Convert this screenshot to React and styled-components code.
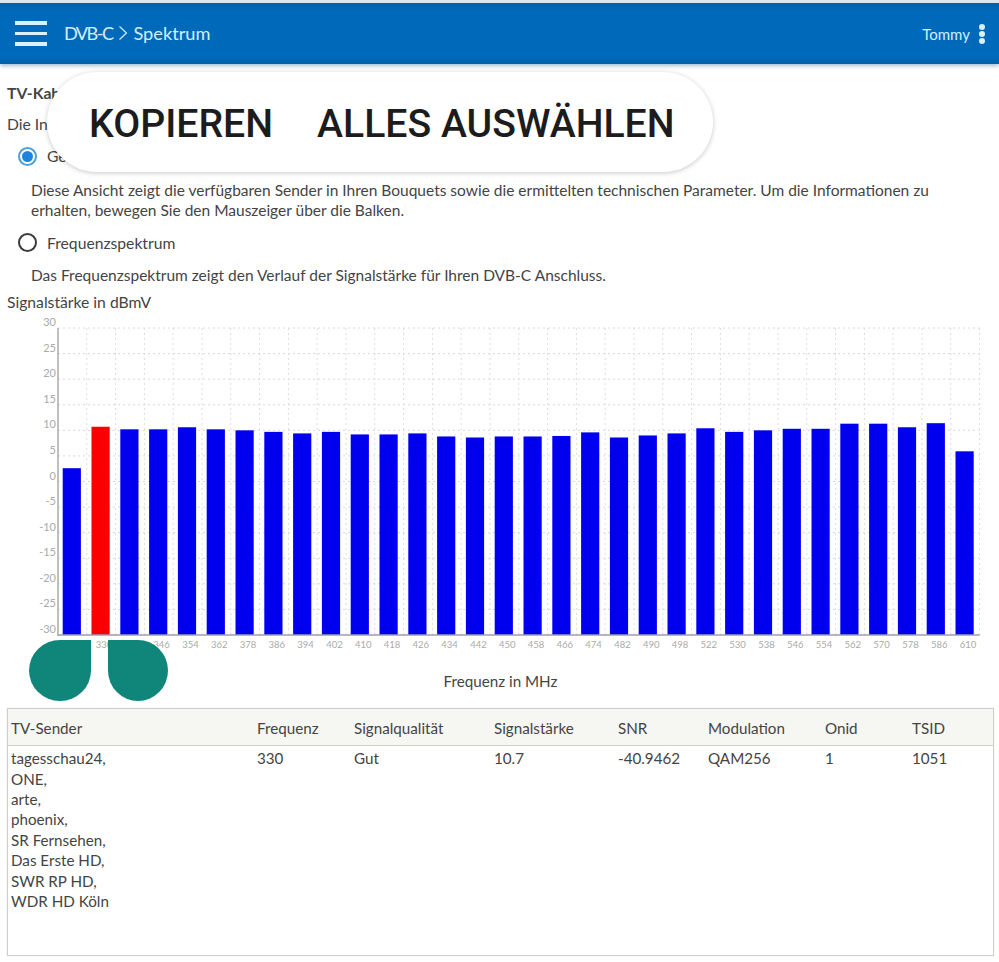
import React from 'react'
import styled, { createGlobalStyle } from 'styled-components'

const GlobalStyle = createGlobalStyle`
  html, body {
    margin: 0;
    padding: 0;
    background: #fff;
  }
  body {
    font-family: Lato, "Noto Sans", sans-serif;
    font-size: 15.7px;
    color: #444;
  }
`

const Page = styled.div`
  position: relative;
  width: 999px;
  height: 962px;
  overflow: hidden;
`

const TopBar = styled.header`
  display: flex;
  align-items: center;
  height: 61px;
  border-top: 3px solid #d3e7f5;
  padding: 0 14px 0 15px;
  background: linear-gradient(#005fa8, #0069ba 12%, #0069ba 90%, #005fa6);
  box-shadow: 0 2px 4px rgba(0, 70, 130, 0.35);
  color: #d2efff;
`

const MenuButton = styled.div`
  display: flex;
  flex-direction: column;
  gap: 7px;
  width: 32px;
  margin-right: 17px;

  span {
    height: 3.5px;
    background: #d9f1ff;
  }
`

const Crumbs = styled.div`
  display: flex;
  align-items: center;
  flex: 1;
  padding-bottom: 2px;
  font-size: 18.2px;

  svg {
    margin: 0 5px 0 6px;
  }
`

const CrumbRoot = styled.span`
  letter-spacing: -1.6px;
`

const UserName = styled.span`
  font-size: 15px;
  margin-right: 9px;
`

const Kebab = styled.div`
  display: flex;
  flex-direction: column;
  gap: 1px;

  span {
    width: 6px;
    height: 6px;
    border-radius: 50%;
    background: #d9f1ff;
  }
`

const Content = styled.main`
  padding: 0 5px 0 7px;
`

const Heading = styled.h1`
  margin: 0;
  padding-top: 19px;
  font-size: 15.7px;
  line-height: 20px;
  font-weight: 700;
  color: #444;
`

const Intro = styled.p`
  margin: 11px 0 0;
  line-height: 20px;
`

const RadioRow = styled.label`
  display: flex;
  align-items: center;
  gap: 10px;
  margin: ${p => p.$top}px 0 0 11px;
  line-height: 20px;
`

const RadioDot = styled.span`
  box-sizing: border-box;
  display: inline-flex;
  align-items: center;
  justify-content: center;
  width: 19px;
  height: 19px;
  border-radius: 50%;
  border: 2px solid ${p => (p.$checked ? '#4d9fd8' : '#3a3a3a')};

  &::after {
    content: '';
    width: 11px;
    height: 11px;
    border-radius: 50%;
    background: ${p => (p.$checked ? '#1f84dc' : 'transparent')};
  }
`

const Hint = styled.p`
  margin: ${p => p.$top}px 0 0 24px;
  font-size: 15.5px;
  line-height: 20.4px;
  max-width: 930px;
`

const AxisTitle = styled.div`
  margin-top: 7px;
  line-height: 20px;
`

const Chart = styled.svg`
  display: block;
  width: 987px;
  height: 354px;
`

const XTitle = styled.div`
  text-align: center;
  margin-top: 5px;
  font-size: 15.2px;
  line-height: 20px;
`

const Table = styled.div`
  margin-top: 17px;
  height: 248px;
  box-sizing: border-box;
  border: 1px solid #cfcfca;
  box-shadow: 0 0 1px #ddd;
  font-size: 15.2px;
`

const Row = styled.div`
  display: grid;
  grid-template-columns: 246px 97px 140px 124px 90px 117px 87px 1fr;
  padding: 0 0 0 3px;
  line-height: 20.4px;
  ${p => p.$head && `
    align-items: center;
    box-sizing: border-box;
    height: 37px;
    padding-top: 1px;
    background: #f6f6f3;
    border-bottom: 1px solid #cfcfca;
  `}
  ${p => !p.$head && 'padding-top: 2px;'}
`

const ChannelList = styled.div`
  display: flex;
  flex-direction: column;
`

const ContextMenu = styled.div`
  position: absolute;
  left: 47px;
  top: 72px;
  box-sizing: border-box;
  display: flex;
  align-items: center;
  gap: 44px;
  width: 666px;
  height: 100px;
  padding: 3px 0 0 42px;
  border-radius: 50px;
  background: #fff;
  box-shadow: 0 1px 5px rgba(0, 0, 0, 0.22);
  font-family: Roboto, sans-serif;
  font-size: 39.2px;
  font-weight: 470;
  color: #1c1c1c;
`

const SelectionHandle = styled.div`
  position: absolute;
  top: 640px;
  left: ${p => p.$left}px;
  width: ${p => p.$size}px;
  height: 61px;
  background: #10867a;
  border-radius: 50%;
  ${p => (p.$side === 'start' ? 'border-top-right-radius: 0;' : 'border-top-left-radius: 0;')}
`

// measured level per channel, same order as the frequency list
const channels = [
  [322, 2.6], [330, 10.7], [338, 10.2], [346, 10.2], [354, 10.6], [362, 10.2], [378, 10.0], [386, 9.7],
  [394, 9.4], [402, 9.7], [410, 9.2], [418, 9.2], [426, 9.4], [434, 8.8], [442, 8.6], [450, 8.8],
  [458, 8.8], [466, 8.9], [474, 9.6], [482, 8.6], [490, 9.0], [498, 9.4], [522, 10.4], [530, 9.7],
  [538, 10.0], [546, 10.3], [554, 10.3], [562, 11.3], [570, 11.3], [578, 10.6], [586, 11.4], [610, 5.9],
]

const X0 = 51
const STEP = 28.8
const TOP = 16
const BOTTOM = 323
const yFor = v => TOP + ((30 - v) * (BOTTOM - TOP)) / 60
const ticks = [30, 25, 20, 15, 10, 5, 0, -5, -10, -15, -20, -25, -30]

function SpectrumChart() {
  return (
    <Chart viewBox="0 0 987 354">
      {ticks.map(t => (
        <g key={t}>
          {t > -30 && (
            <line x1={X0} x2={X0 + STEP * 32} y1={yFor(t)} y2={yFor(t)} stroke="#d8d8d8" strokeDasharray="2 3" />
          )}
          <text x={X0 - 2} y={yFor(t) - 2} textAnchor="end" fontSize="11" fill="#aaa">{t}</text>
        </g>
      ))}
      {channels.map((_, i) => (
        <line
          key={i}
          x1={X0 + STEP * (i + 1)}
          x2={X0 + STEP * (i + 1)}
          y1={TOP}
          y2={BOTTOM}
          stroke="#dcdcdc"
          strokeDasharray="2 3"
        />
      ))}
      {channels.map(([freq, level], i) => (
        <g key={freq}>
          <rect
            x={X0 + 4.7 + STEP * i}
            y={yFor(level)}
            width={18.2}
            height={BOTTOM - yFor(level)}
            fill={i === 1 ? '#fa0000' : '#0000ee'}
          />
          <text x={X0 + 17.2 + STEP * i} y={335.5} textAnchor="middle" fontSize="9.5" fill="#aaa">{freq}</text>
        </g>
      ))}
      <line x1={X0} x2={X0} y1={TOP} y2={BOTTOM + 1} stroke="#aaa" strokeWidth="1.5" />
      <line x1={X0} x2={X0 + STEP * 32} y1={BOTTOM} y2={BOTTOM} stroke="#9c9cb4" strokeWidth="1.5" />
    </Chart>
  )
}

const columns = ['TV-Sender', 'Frequenz', 'Signalqualität', 'Signalstärke', 'SNR', 'Modulation', 'Onid', 'TSID']
const senders = [
  'tagesschau24,', 'ONE,', 'arte,', 'phoenix,', 'SR Fernsehen,', 'Das Erste HD,', 'SWR RP HD,', 'WDR HD Köln',
]

export default function App() {
  return (
    <Page>
      <GlobalStyle />
      <TopBar>
        <MenuButton><span /><span /><span /></MenuButton>
        <Crumbs>
          <CrumbRoot>DVB-C</CrumbRoot>
          <svg width="10" height="16" viewBox="0 0 10 16" fill="none" stroke="#d2efff" strokeWidth="1.2">
            <path d="M1.5 1.5 L8.5 8 L1.5 14.5" />
          </svg>
          Spektrum
        </Crumbs>
        <UserName>Tommy</UserName>
        <Kebab><span /><span /><span /></Kebab>
      </TopBar>

      <Content>
        <Heading>TV-Kabel</Heading>
        <Intro>Die Informationen</Intro>
        <RadioRow $top={12}>
          <RadioDot $checked />
          Gesamtansicht
        </RadioRow>
        <Hint $top={14}>
          Diese Ansicht zeigt die verfügbaren Sender in Ihren Bouquets sowie die ermittelten technischen Parameter. Um die Informationen zu erhalten, bewegen Sie den Mauszeiger über die Balken.
        </Hint>
        <RadioRow $top={12}>
          <RadioDot />
          Frequenzspektrum
        </RadioRow>
        <Hint $top={12}>
          Das Frequenzspektrum zeigt den Verlauf der Signalstärke für Ihren DVB-C Anschluss.
        </Hint>
        <AxisTitle>Signalstärke in dBmV</AxisTitle>
        <SpectrumChart />
        <XTitle>Frequenz in MHz</XTitle>
        <Table>
          <Row $head>
            {columns.map(c => <div key={c}>{c}</div>)}
          </Row>
          <Row>
            <ChannelList>
              {senders.map(s => <span key={s}>{s}</span>)}
            </ChannelList>
            <div>330</div>
            <div>Gut</div>
            <div>10.7</div>
            <div>-40.9462</div>
            <div>QAM256</div>
            <div>1</div>
            <div>1051</div>
          </Row>
        </Table>
      </Content>

      <ContextMenu>
        <span>KOPIEREN</span>
        <span>ALLES AUSWÄHLEN</span>
      </ContextMenu>
      <SelectionHandle $left={29} $size={62} $side="start" />
      <SelectionHandle $left={108} $size={60} $side="end" />
    </Page>
  )
}
